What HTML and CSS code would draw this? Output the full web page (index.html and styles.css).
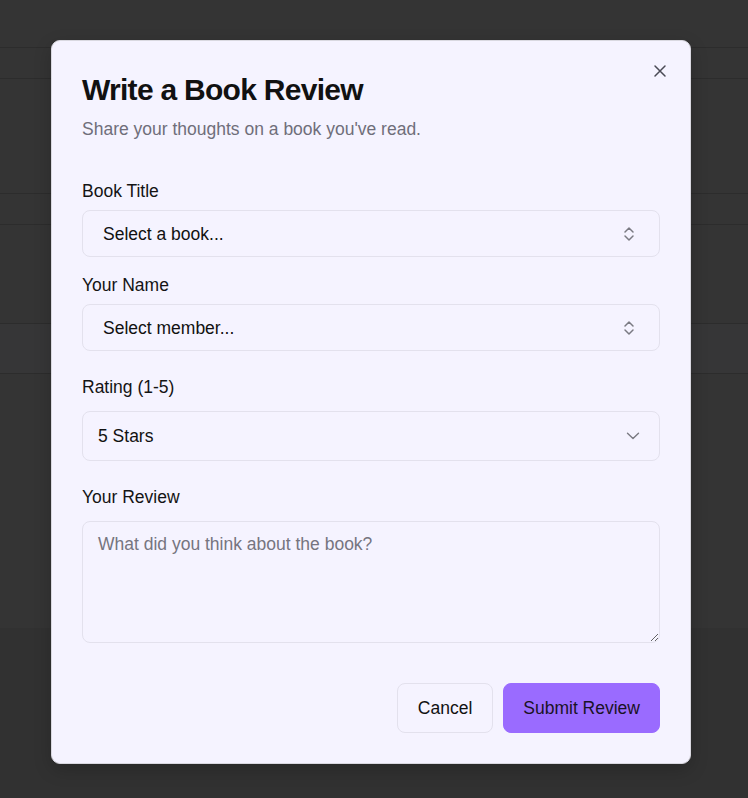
FILE: index.html
```html
<!DOCTYPE html>
<html lang="en">
<head>
<meta charset="utf-8">
<title>Write a Book Review</title>
<link rel="stylesheet" href="styles.css">
</head>
<body>
<div class="page">
  <div class="row r1"></div>
  <div class="row r2"></div>
  <div class="row r3"></div>
  <div class="row r4"></div>
  <div class="row r5"></div>
  <div class="row r6"></div>
  <div class="row r7"></div>
</div>

<div class="modal" role="dialog" aria-labelledby="dlg-title">
  <button class="close" type="button" aria-label="Close">
    <svg width="14" height="14" viewBox="0 0 14 14" fill="none" stroke="#4a4a55" stroke-width="1.5" stroke-linecap="round"><path d="M2 2 L12 12 M12 2 L2 12"/></svg>
  </button>
  <h2 id="dlg-title" class="title">Write a Book Review</h2>
  <p class="subtitle">Share your thoughts on a book you've read.</p>

  <form class="form">
    <div class="field f-tight">
      <label class="label">Book Title</label>
      <div class="combo">
        <span class="combo-text">Select a book...</span>
        <svg class="updown" width="12" height="16" viewBox="0 0 12 16" fill="none" stroke="#7a7a82" stroke-width="1.5" stroke-linecap="round" stroke-linejoin="round"><path d="M2 6 L6 2 L10 6 M2 10 L6 14 L10 10"/></svg>
      </div>
    </div>
    <div class="field f-tight f2">
      <label class="label">Your Name</label>
      <div class="combo">
        <span class="combo-text">Select member...</span>
        <svg class="updown" width="12" height="16" viewBox="0 0 12 16" fill="none" stroke="#7a7a82" stroke-width="1.5" stroke-linecap="round" stroke-linejoin="round"><path d="M2 6 L6 2 L10 6 M2 10 L6 14 L10 10"/></svg>
      </div>
    </div>
    <div class="field f-wide">
      <label class="label">Rating (1-5)</label>
      <div class="select">
        <span class="select-text">5 Stars</span>
        <svg class="down" width="14" height="8" viewBox="0 0 14 8" fill="none" stroke="#7a7a82" stroke-width="1.4" stroke-linecap="round" stroke-linejoin="round"><path d="M1.5 1.2 L7 6.5 L12.5 1.2"/></svg>
      </div>
    </div>
    <div class="field f-wide">
      <label class="label">Your Review</label>
      <textarea class="textarea" placeholder="What did you think about the book?"></textarea>
    </div>
    <div class="actions">
      <button type="button" class="btn btn-cancel">Cancel</button>
      <button type="button" class="btn btn-submit">Submit Review</button>
    </div>
  </form>
</div>
</body>
</html>
```

FILE: styles.css
```css
* { box-sizing: border-box; }

html, body {
  margin: 0;
  padding: 0;
}

body {
  background: #313131;
  font-family: "Liberation Sans", Arial, sans-serif;
  width: 748px;
  height: 798px;
  overflow: hidden;
}

.page {
  height: 628px;
  background: #343434;
  display: flex;
  flex-direction: column;
}

.row {
  border-bottom: 1px solid #2c2c2c;
}
.r1 { height: 48px; }
.r2 { height: 31px; }
.r3 { height: 115px; }
.r4 { height: 31px; }
.r5 { height: 99px; }
.r6 { height: 50px; background: #363637; }
.r7 { flex: 1; border-bottom: none; }

.modal {
  position: absolute;
  left: 51px;
  top: 40px;
  width: 640px;
  background: #f5f3ff;
  border: 1px solid #d9d8e0;
  border-radius: 9px;
  padding: 30px;
  box-shadow: 0 6px 18px rgba(0,0,0,0.18);
}

.close {
  position: absolute;
  top: 23px;
  right: 23px;
  width: 14px;
  height: 14px;
  padding: 0;
  border: none;
  background: transparent;
  display: flex;
  align-items: center;
  justify-content: center;
}

.title {
  margin: 0;
  font-size: 30px;
  line-height: 37px;
  font-weight: 700;
  letter-spacing: -0.024em;
  color: #111111;
}

.subtitle {
  margin: 7px 0 0;
  font-size: 17.5px;
  line-height: 28px;
  color: #6f6e7a;
}

.form {
  display: flex;
  flex-direction: column;
  margin-top: 36px;
}

.field {
  display: flex;
  flex-direction: column;
}

.label {
  font-size: 17.5px;
  line-height: 24px;
  color: #141414;
}

.f-tight .label { margin-bottom: 7px; }
.f2 { margin-top: 16px; }
.f-wide { margin-top: 24px; }
.f-wide .label { margin-bottom: 12px; }

.combo, .select {
  display: flex;
  align-items: center;
  justify-content: space-between;
  border: 1px solid #e3e1ed;
  border-radius: 8px;
  background: #f5f3ff;
  font-size: 17.5px;
  color: #111111;
}

.combo {
  height: 47px;
  padding: 0 24px 0 20px;
}

.select {
  height: 50px;
  padding: 0 19px 0 15px;
}

.combo-text, .select-text { line-height: 24px; }

.textarea {
  display: block;
  width: 100%;
  height: 122px;
  border: 1px solid #e3e1ed;
  border-radius: 8px;
  background: #f5f3ff;
  padding: 10px 15px;
  font-family: "Liberation Sans", Arial, sans-serif;
  font-size: 17.5px;
  line-height: 24px;
  color: #111111;
  resize: vertical;
  outline: none;
}
.textarea::placeholder { color: #767580; }

.actions {
  display: flex;
  justify-content: flex-end;
  gap: 10px;
  margin-top: 40px;
}

.btn {
  height: 50px;
  padding: 0 20px;
  border-radius: 8px;
  font-family: "Liberation Sans", Arial, sans-serif;
  font-size: 17.5px;
  color: #111111;
  cursor: pointer;
}

.btn-cancel {
  background: #f5f3ff;
  border: 1px solid #e3e1ed;
}

.btn-submit {
  padding: 0 19px;
  background: #9a6bff;
  border: 1px solid #9a6bff;
  color: #1a1326;
}
```
